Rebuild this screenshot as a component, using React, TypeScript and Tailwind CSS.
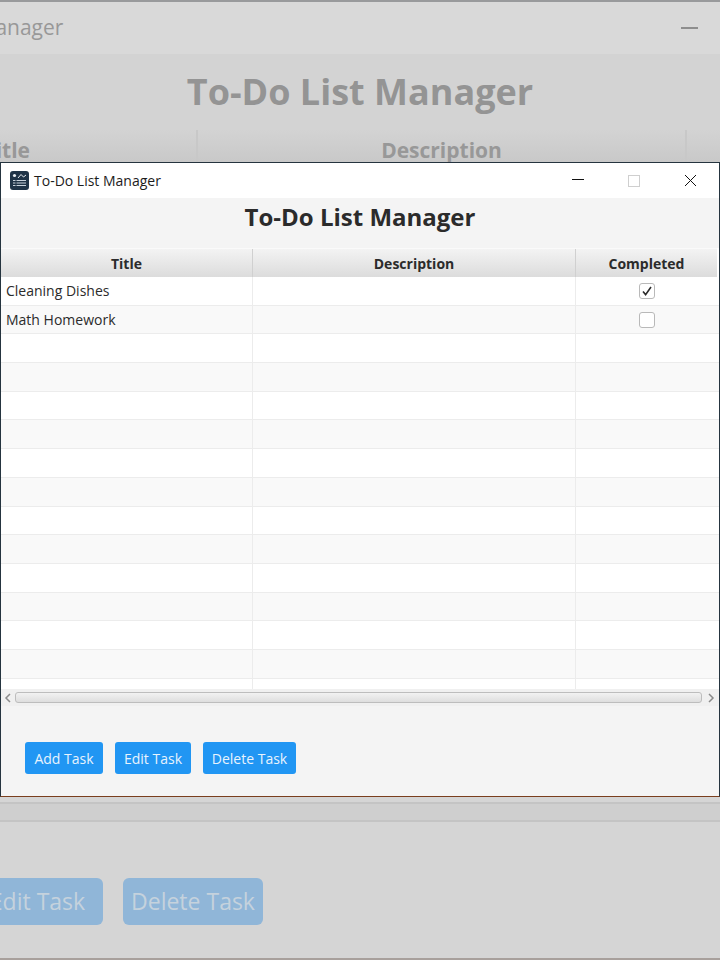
const font = { fontFamily: '"Open Sans", "Noto Sans", sans-serif' };

const rows = Array.from({ length: 15 }, (_, i) => i);

function AppIcon() {
  return (
    <svg width="19" height="19" viewBox="0 0 19 19" className="shrink-0">
      <rect x="0" y="0" width="19" height="19" rx="3" fill="#1f3347" />
      <circle cx="4.5" cy="4.5" r="1.6" fill="#e8edf2" />
      <path d="M8 7 L11 3.5 L13.5 6 L16 4" fill="none" stroke="#e8edf2" strokeWidth="1" />
      <path d="M3 9.5H16M3 12H16M3 14.5H16" stroke="#c8d2dc" strokeWidth="1.2" />
      <path d="M6 8.5V16" stroke="#1f3347" strokeWidth="1" />
    </svg>
  );
}

function Check({ checked }: { checked?: boolean }) {
  return (
    <div className="w-[16px] h-[16px] rounded-[3px] border border-[#b9b9b9] bg-white flex items-center justify-center">
      {checked && (
        <svg width="10" height="10" viewBox="0 0 10 10">
          <path d="M1 5.5 L3.6 8.6 L9 1" fill="none" stroke="#2b2b2b" strokeWidth="1.6" />
        </svg>
      )}
    </div>
  );
}

function TaskRow({ i }: { i: number }) {
  const title = i === 0 ? "Cleaning Dishes" : i === 1 ? "Math Homework" : "";
  return (
    <div className={`flex h-[28.7px] shrink-0 border-b border-[#ececec] ${i % 2 === 0 ? "bg-white" : "bg-[#f9f9f9]"}`}>
      <div className="w-[252px] border-r border-[#ececec] pl-[5px] flex items-center text-[14px] text-[#2b2b2b]">
        {title}
      </div>
      <div className="w-[323px] border-r border-[#ececec]" />
      <div className="flex-1 flex items-center justify-center pr-[2px]">
        {i === 0 && <Check checked />}
        {i === 1 && <Check />}
      </div>
    </div>
  );
}

function BlueButton({ label, width }: { label: string; width: string }) {
  return (
    <button className={`${width} h-[32px] rounded-[3px] bg-[#2196f3] text-[14px] text-[#e8f3fd] flex items-center justify-center`}>
      {label}
    </button>
  );
}

function BackWindow() {
  return (
    <div className="h-[960px] flex flex-col bg-[#d5d5d5] border-t-2 border-[#999a9c] border-b-2 border-b-[#a8a09c]">
      <div className="h-[52px] shrink-0 bg-[#d9d9d9] flex items-center justify-between pr-[22px]">
        <span className="ml-[-127px] text-[21px] text-[#989898] whitespace-nowrap">To-Do List Manager</span>
        <div className="w-[17px] h-[2px] bg-[#8e8e8e]" />
      </div>
      <div className="h-[76px] shrink-0 bg-[#d3d3d3] flex items-center justify-center">
        <span className="text-[36px] font-bold text-[#949494]">To-Do List Manager</span>
      </div>
      <div className="flex h-[40px] shrink-0 bg-gradient-to-b from-[#d3d3d3] to-[#c6c6c6] text-[21px] font-bold text-[#989898]">
        <div className="w-[198px] border-r-2 border-[#c8c8c8] relative overflow-hidden">
          <span className="absolute right-[166px] top-[5px]">Title</span>
        </div>
        <div className="w-[489px] border-r-2 border-[#c8c8c8] flex justify-center pt-[5px]">Description</div>
      </div>
      <div className="flex-1" />
      <div className="h-[20px] shrink-0 mb-[56px] bg-[#cfcfcf] border-y-2 border-[#c4c4c4]" />
      <div className="flex gap-[20px] ml-[-30px] mb-[33px] text-[23px] text-[#c5d2dd]">
        <div className="w-[133px] h-[47px] rounded-[6px] bg-[#90b6d8] flex items-center justify-center pl-[2px]">Edit Task</div>
        <div className="w-[140px] h-[47px] rounded-[6px] bg-[#90b6d8] flex items-center justify-center">Delete Task</div>
      </div>
    </div>
  );
}

function FrontWindow() {
  return (
    <div className="absolute left-0 top-[162px] w-[720px] h-[635px] flex flex-col bg-[#f4f4f4] border border-[#25343f] border-b-[#7a3f1e]">
      <div className="h-[35px] shrink-0 bg-white flex items-center pl-[9px] gap-[5px]">
        <AppIcon />
        <span className="text-[14px] text-[#1c1c1c]">To-Do List Manager</span>
        <div className="ml-auto flex items-center">
          <div className="w-[12px] h-[1.5px] bg-[#111] mr-[44px] mb-[2px]" />
          <div className="w-[12px] h-[12px] border border-[#cfcfcf] mr-[44px]" />
          <svg width="13" height="13" viewBox="0 0 13 13" className="mr-[22px]">
            <path d="M1 1 L12 12 M12 1 L1 12" stroke="#111" strokeWidth="1" fill="none" />
          </svg>
        </div>
      </div>
      <h1 className="h-[50px] shrink-0 pt-[3px] text-center text-[24px] font-bold text-[#2b2b2b] leading-[32px]">
        To-Do List Manager
      </h1>
      <div className="h-[441px] shrink-0 bg-white flex flex-col overflow-hidden">
        <div className="flex h-[29px] shrink-0 w-[716px] bg-gradient-to-b from-[#f3f3f3] to-[#dcdcdc] text-[14px] font-bold text-[#2b2b2b] border-t border-[#fafafa]">
          <div className="w-[252px] border-r border-[#d0d0d0] flex items-center justify-center">Title</div>
          <div className="w-[323px] border-r border-[#d0d0d0] flex items-center justify-center">Description</div>
          <div className="flex-1 flex items-center justify-center">Completed</div>
        </div>
        <div className="flex-1 overflow-hidden">
          {rows.map((i) => (
            <TaskRow key={i} i={i} />
          ))}
        </div>
      </div>
      <div className="h-[17px] shrink-0 bg-[#f0f0f0] flex items-center">
        <svg width="14" height="14" viewBox="0 0 14 14" className="shrink-0">
          <path d="M9 3 L5 7 L9 11" fill="none" stroke="#8a8a8a" strokeWidth="1.5" />
        </svg>
        <div className="flex-1 h-[11px] rounded-[3px] border border-[#bdbdbd] bg-gradient-to-b from-[#f2f2f2] to-[#dedede]" />
        <svg width="17" height="14" viewBox="0 0 17 14" className="shrink-0">
          <path d="M7 3 L11 7 L7 11" fill="none" stroke="#8a8a8a" strokeWidth="1.5" />
        </svg>
      </div>
      <div className="flex items-start gap-[12px] pl-[24px] pt-[36px]">
        <BlueButton label="Add Task" width="w-[78px]" />
        <BlueButton label="Edit Task" width="w-[76px]" />
        <BlueButton label="Delete Task" width="w-[93px]" />
      </div>
    </div>
  );
}

export default function App() {
  return (
    <div className="relative w-[720px] h-[960px] overflow-hidden" style={font}>
      <BackWindow />
      <FrontWindow />
    </div>
  );
}
